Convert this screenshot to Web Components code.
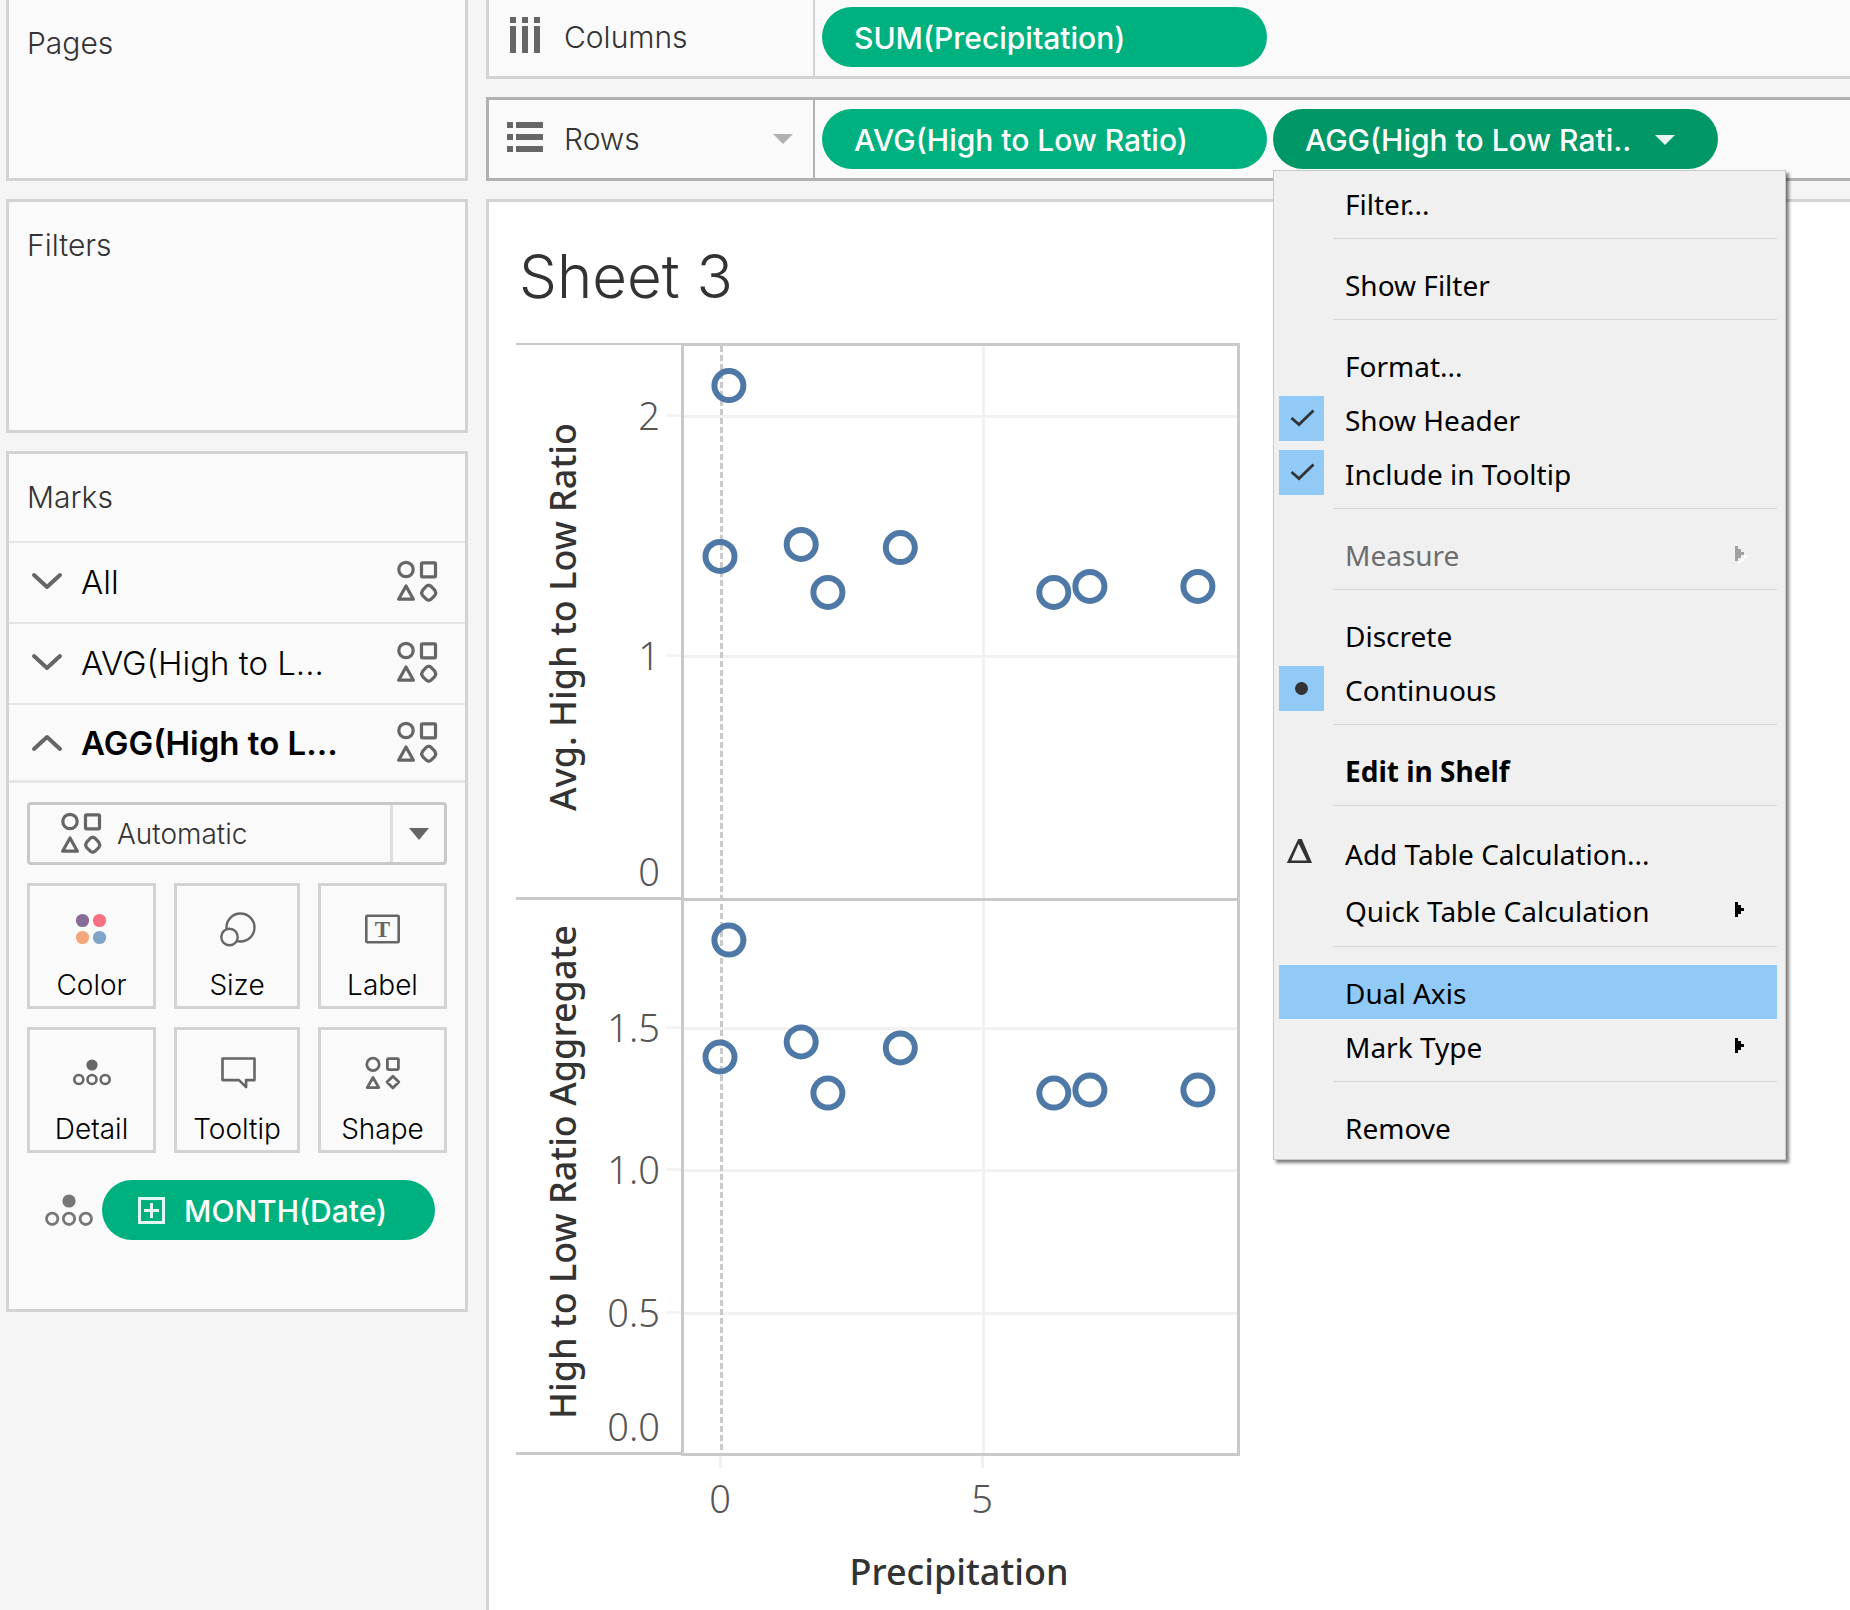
<!DOCTYPE html>
<html lang="en">
<head>
<meta charset="utf-8">
<title>Sheet 3</title>
<style>
  :root {
    --line: #d3d3d3;
    --line-strong: #b1b1b1;
    --rule: #e6e6e6;
    --panel: #fafafa;
    --ink: #333333;
    --icon: #666666;
    --green: #00b180;
    --green-dark: #009767;
    --ui: Inter, "Liberation Sans", sans-serif;
    --menu: "Noto Sans", "Open Sans", sans-serif;
  }
  body { margin: 0; background: #f5f5f5; color: var(--ink); font-family: var(--ui); overflow: hidden; }
</style>
</head>
<body>
<viz-workspace></viz-workspace>

<script>
const define = (name, html, setup) => {
  const template = document.createElement("template");
  template.innerHTML = html;
  customElements.define(name, class extends HTMLElement {
    connectedCallback() {
      if (this.shadowRoot) return;
      this.attachShadow({ mode: "open" }).append(template.content.cloneNode(true));
      if (setup) setup(this, this.shadowRoot);
    }
  });
};

/* Icons: [width, height, markup] */
const ICONS = {
  columns: [34, 40, `<path fill="#666" d="M3 0h6v6H3zM15 0h6v6h-6zM27 0h6v6h-6zM3 9h6v27H3zM15 9h6v27h-6zM27 9h6v27h-6z"/>`],
  rows: [36, 34, `<path fill="#666" d="M0 0h6v6H0zM0 12h6v6H0zM0 24h6v6H0zM9 0h27v6H9zM9 12h27v6H9zM9 24h27v6H9z"/>`],
  down: [30, 18, `<path fill="none" stroke="#666" stroke-width="4" stroke-linecap="round" stroke-linejoin="round" d="M2 2l13 12L28 2"/>`],
  up: [30, 18, `<path fill="none" stroke="#666" stroke-width="4" stroke-linecap="round" stroke-linejoin="round" d="M2 15L15 3l13 12"/>`],
  shapes: [42, 42, `<g fill="none" stroke="#666" stroke-width="3.2" stroke-linejoin="round"><circle cx="10" cy="8.500" r="7.200"/><rect x="25.500" y="1.800" width="14" height="14" rx="1"/><path d="M10 25L2.600 38.200h14.800zM32.700 24.200l2.200.9 3.800 4 1.200 3-1.200 2.600-3.800 3.700-2.200 1-2.200-1-3.800-3.700-1.200-2.600 1.200-3 3.800-4z"/></g>`],
  shapesSmall: [36, 34, `<g fill="none" stroke="#666" stroke-width="2.8" stroke-linejoin="round"><circle cx="8" cy="8.400" r="6.200"/><rect x="22.400" y="2.600" width="11" height="11" rx="1"/><path d="M8 21.500L2.200 31.600h11.600zM27.900 20.200l5.900 5.900-5.900 5.900-5.900-5.900z"/></g>`],
  color: [32, 30, `<circle cx="6.500" cy="6.500" r="6.600" fill="#866d97"/><circle cx="23.500" cy="6.500" r="6.600" fill="#fa7080"/><circle cx="6.500" cy="23.500" r="6.600" fill="#f4a77c"/><circle cx="23.500" cy="23.500" r="6.600" fill="#80a3ca"/>`],
  size: [34, 34, `<g fill="#fafafa" stroke="#666" stroke-width="2.400"><circle cx="20.500" cy="15.500" r="14"/><circle cx="9.500" cy="25" r="8.200"/></g>`],
  label: [36, 30, `<rect x="1.300" y="1.800" width="32.400" height="26.400" rx="1" fill="none" stroke="#666" stroke-width="2.600"/><text x="17.500" y="22.500" text-anchor="middle" font-family="Liberation Serif" font-weight="700" font-size="23" fill="#666">T</text>`],
  detail: [38, 28, `<circle cx="19" cy="6" r="5.600" fill="#666"/><g fill="none" stroke="#666" stroke-width="2.600"><circle cx="5.800" cy="20.500" r="4.500"/><circle cx="19" cy="20.500" r="4.500"/><circle cx="32.200" cy="20.500" r="4.500"/></g>`],
  detailLarge: [48, 32, `<circle cx="24" cy="7" r="6.600" fill="#777"/><g fill="none" stroke="#777" stroke-width="2.800"><circle cx="7.200" cy="24.800" r="5.700"/><circle cx="24" cy="24.800" r="5.700"/><circle cx="40.800" cy="24.800" r="5.700"/></g>`],
  tooltip: [33, 32, `<path fill="none" stroke="#666" stroke-width="2.600" stroke-linejoin="round" d="M1.500 1.500h32v21.600h-8.400v7L18 23.100H1.500z"/>`],
  plus: [27, 27, `<path fill="none" stroke="#e5f7f2" stroke-width="3" d="M1.500 1.500h24v24h-24zM13.500 6v15M6 13.500h15"/>`],
  check: [45, 45, `<path fill="none" stroke="#333" stroke-width="2.800" d="M12.500 22l7.500 6.500L34.500 14.500"/>`],
  dot: [45, 45, `<circle cx="22.500" cy="22.500" r="6.500" fill="#333"/>`],
  delta: [45, 45, `<path fill="#333" fill-rule="evenodd" d="M7.800 34L19.200 10h3.600L33 34zM12.300 31.600h15.600L19.700 14.800z"/>`]
};
customElements.define("viz-icon", class extends HTMLElement {
  static observedAttributes = ["name"];
  connectedCallback() { this.draw(); }
  attributeChangedCallback() { this.draw(); }
  draw() {
    const icon = ICONS[this.getAttribute("name")];
    if (!icon) return;
    const [w, h, body] = icon;
    const root = this.shadowRoot || this.attachShadow({ mode: "open" });
    root.innerHTML =
      `<style>:host{display:block;flex:none}svg{display:block;overflow:visible}</style>
       <svg width="${w}" height="${h}" viewBox="0 0 ${w} ${h}" aria-hidden="true">${body}</svg>`;
  }
});

/* Bordered card with a heading */
define("viz-card", `
  <style>
    :host { display: block; box-sizing: border-box; background: var(--panel); border: 3px solid var(--line); }
    :host([first]) { border-top: 0; }
    h2 { margin: 0; padding: 25px 18px 0; font-size: 30px; line-height: 36px; font-weight: 300; }
  </style>
  <h2></h2><slot></slot>`,
  (host, root) => { root.querySelector("h2").textContent = host.getAttribute("heading"); });

/* Field pill */
define("viz-pill", `
  <style>
    :host { display: block; flex: none; width: 445px; }
    button { box-sizing: border-box; width: 100%; height: 60px; border: 0; border-radius: 30px; padding: 1px 32px 0;
      display: flex; align-items: center; background: var(--green); color: #fff;
      font: 500 30px/36px var(--ui); white-space: nowrap; }
    :host([active]) button { background: var(--green-dark); }
    i { display: none; margin-left: 24px; border: 10px solid transparent; border-top-color: #e5f4f0; border-bottom: 0; }
    :host([active]) i { display: block; }
    ::slotted(viz-icon) { margin: 0 19px 0 4px; }
  </style>
  <button type="button"><slot></slot><i></i></button>`);

/* Columns / Rows shelf */
define("viz-shelf", `
  <style>
    :host { display: flex; box-sizing: border-box; height: 84px; background: var(--panel);
      border: 3px solid var(--line); border-right: 0; --edge: var(--line); }
    :host([first]) { border-top: 0; height: 79px; }
    :host([focused]) { border-color: var(--line-strong); --edge: var(--line-strong); }
    .head { box-sizing: border-box; width: 326px; flex: none; border-right: 2px solid var(--edge);
      display: flex; align-items: center; padding: 0 20px 0 18px; font-size: 30px; line-height: 36px; font-weight: 300; }
    .icon { width: 57px; }
    i { display: none; margin-left: auto; border: 10px solid transparent; border-top-color: var(--line-strong); border-bottom: 0; }
    :host([focused]) i { display: block; }
    .fields { display: flex; align-items: center; gap: 6px; padding-left: 7px; }
    :host([first]) .head, :host([first]) .fields { padding-bottom: 2px; }
  </style>
  <div class="head"><span class="icon"><viz-icon></viz-icon></span><span class="name"></span><i></i></div>
  <div class="fields"><slot></slot></div>`,
  (host, root) => {
    root.querySelector("viz-icon").setAttribute("name", host.getAttribute("icon"));
    root.querySelector(".name").textContent = host.getAttribute("name");
  });

/* Collapsible row of the Marks card */
define("viz-mark-row", `
  <style>
    :host { display: block; border-top: 2px solid var(--rule); }
    button { box-sizing: border-box; width: 100%; height: 79px; border: 0; background: none; color: #000;
      display: flex; align-items: center; padding: 0 27px 2px 23px; font: 300 33px/40px var(--ui); text-align: left; }
    span { flex: 1; padding-left: 19px; }
    :host([open]) { border-bottom: 3px solid var(--rule); }
    :host([open]) button { height: 75px; font-weight: 600; padding-bottom: 0; }
  </style>
  <button type="button"><viz-icon name="down"></viz-icon><span><slot></slot></span><viz-icon name="shapes"></viz-icon></button>`,
  (host, root) => {
    const open = host.hasAttribute("open");
    root.querySelector("viz-icon").setAttribute("name", open ? "up" : "down");
    root.querySelector("button").setAttribute("aria-expanded", open);
  });

/* Mark type drop-down */
define("viz-mark-type", `
  <style>
    :host { display: grid; grid-template-columns: 1fr 54px; box-sizing: border-box; height: 63px;
      border: 3px solid #c8c8c8; border-radius: 4px; align-items: center; }
    viz-icon { grid-area: 1 / 1; margin-left: 30px; }
    select { grid-area: 1 / 1 / 2 / 3; width: 100%; height: 57px; margin: 0; padding: 1px 0 0 87px; border: 0; background: none;
      appearance: none; color: var(--ink); font: 300 28px/36px var(--ui); }
    .arrow { grid-area: 1 / 2; height: 57px; border-left: 3px solid #dedede; display: flex; align-items: center; justify-content: center;
      pointer-events: none; }
    i { border: 10px solid transparent; border-top: 12px solid var(--icon); border-bottom: 0; }
  </style>
  <viz-icon name="shapes"></viz-icon>
  <select aria-label="Mark type"><option>Automatic</option></select>
  <div class="arrow"><i></i></div>`);

/* Square button of the Marks card */
define("viz-mark-button", `
  <style>
    :host { display: block; }
    button { box-sizing: border-box; width: 100%; height: 126px; padding: 24px 0 0; border: 3px solid var(--line); background: none;
      display: flex; flex-direction: column; align-items: center; gap: 22px; color: #000; font: 300 28px/30px var(--ui); }
    .icon { height: 38px; display: flex; align-items: center; }
  </style>
  <button type="button"><span class="icon"><slot name="icon"></slot></span><span><slot></slot></span></button>`);

define("viz-marks", `
  <style>
    :host { display: block; }
    .rows { margin-top: 26px; }
    .body { padding: 19px 18px 69px; }
    .grid { display: grid; grid-template-columns: 129fr 126fr 129fr; gap: 18px; margin: 18px 0 27px; }
    .field { display: flex; align-items: center; gap: 9px; padding: 0 12px 0 18px; }
    .field viz-pill { flex: 1; width: auto; }
  </style>
  <div class="rows">
    <viz-mark-row>All</viz-mark-row>
    <viz-mark-row>AVG(High to L...</viz-mark-row>
    <viz-mark-row open>AGG(High to L...</viz-mark-row>
  </div>
  <div class="body">
    <viz-mark-type></viz-mark-type>
    <div class="grid">
      <viz-mark-button><viz-icon slot="icon" name="color"></viz-icon>Color</viz-mark-button>
      <viz-mark-button><viz-icon slot="icon" name="size"></viz-icon>Size</viz-mark-button>
      <viz-mark-button><viz-icon slot="icon" name="label"></viz-icon>Label</viz-mark-button>
      <viz-mark-button><viz-icon slot="icon" name="detail"></viz-icon>Detail</viz-mark-button>
      <viz-mark-button><viz-icon slot="icon" name="tooltip"></viz-icon>Tooltip</viz-mark-button>
      <viz-mark-button><viz-icon slot="icon" name="shapesSmall"></viz-icon>Shape</viz-mark-button>
    </div>
    <div class="field"><viz-icon name="detailLarge"></viz-icon><viz-pill><viz-icon name="plus"></viz-icon>MONTH(Date)</viz-pill></div>
  </div>`);

/* Context menu */
define("viz-menu-item", `
  <style>
    :host { display: block; }
    button { box-sizing: border-box; width: 100%; height: 54px; border: 0; padding: 2px 30px 0 0; background: none; color: #000;
      display: flex; align-items: center; font: 400 28px/36px var(--menu); text-align: left; white-space: nowrap; }
    :host([tall]) button { height: 57px; }
    :host([selected]) button { background: #91c9f7; }
    :host([bold]) button { font-weight: 700; }
    button:disabled { color: #6d6d6d; }
    .mark { width: 45px; height: 45px; margin: 0 21px 4px 0; flex: none; }
    :host([mark=check]) .mark, :host([mark=dot]) .mark { background: #91c9f7; }
    svg { margin-left: auto; display: none; }
    :host([submenu]) svg { display: block; }
  </style>
  <button type="button" role="menuitem"><span class="mark"></span><slot></slot>
    <svg width="12" height="18" viewBox="0 0 12 18" aria-hidden="true"><path class="lo" fill="none" d="M3 15h3v-3h3V9h3v3H9v3H6v3H3z"/><path class="hi" fill="#000" d="M0 0h3v3h3v3h3v3H6v3H3v3H0z"/></svg>
  </button>`,
  (host, root) => {
    const mark = host.getAttribute("mark");
    if (mark) {
      const icon = document.createElement("viz-icon");
      icon.setAttribute("name", mark);
      root.querySelector(".mark").append(icon);
    }
    if (host.hasAttribute("disabled")) {
      root.querySelector("button").disabled = true;
      root.querySelector(".hi").setAttribute("fill", "#a0a0a0");
      root.querySelector(".lo").setAttribute("fill", "#fff");
    }
  });
define("viz-menu", `
  <style>
    :host { display: block; box-sizing: border-box; width: 513px; padding: 5px 8px 5px 5px; background: #f0f0f0;
      border: 1px solid #c8c8c8; box-shadow: 3px 3px 3px rgba(0, 0, 0, .5); }
    hr { height: 1px; margin: 8px 0 18px 54px; border: 0; background: #d7d7d7; }
  </style>
  <div role="menu">
    <viz-menu-item>Filter...</viz-menu-item><hr>
    <viz-menu-item>Show Filter</viz-menu-item><hr>
    <viz-menu-item>Format...</viz-menu-item>
    <viz-menu-item mark="check">Show Header</viz-menu-item>
    <viz-menu-item mark="check">Include in Tooltip</viz-menu-item><hr>
    <viz-menu-item disabled submenu>Measure</viz-menu-item><hr>
    <viz-menu-item>Discrete</viz-menu-item>
    <viz-menu-item mark="dot">Continuous</viz-menu-item><hr>
    <viz-menu-item bold>Edit in Shelf</viz-menu-item><hr>
    <viz-menu-item tall mark="delta">Add Table Calculation...</viz-menu-item>
    <viz-menu-item tall submenu>Quick Table Calculation</viz-menu-item><hr>
    <viz-menu-item selected>Dual Axis</viz-menu-item>
    <viz-menu-item submenu>Mark Type</viz-menu-item><hr>
    <viz-menu-item>Remove</viz-menu-item>
  </div>`);

/* Scatter plot: two panes that share the Precipitation axis */
customElements.define("viz-scatter", class extends HTMLElement {
  connectedCallback() {
    if (this.shadowRoot) return;
    const precipitation = [0.17, 0, 1.55, 2.06, 3.44, 6.37, 7.06, 9.12];
    const panes = [
      { title: "Avg. High to Low Ratio", top: 0, bottom: 555, zero: 554, unit: 240, ticks: [["2", 72], ["1", 312]], base: "0",
        values: [2.131, 1.419, 1.469, 1.269, 1.456, 1.269, 1.294, 1.294] },
      { title: "High to Low Ratio Aggregate", top: 555, bottom: 1110, zero: 1112, unit: 284.5, ticks: [["1.5", 684], ["1.0", 826], ["0.5", 969]], base: "0.0",
        values: [1.81, 1.399, 1.452, 1.272, 1.431, 1.272, 1.283, 1.283] }
    ];
    const x = v => 204 + v * 52.4;
    const rect = (x0, y0, w, h, fill) => `<rect x="${x0}" y="${y0}" width="${w}" height="${h}" fill="${fill}"/>`;
    let g = rect(466, 2, 3, 1109, "#f1f1f1"), labels = "", marks = "", frame = "";
    for (const p of panes) {
      for (const [t, y] of p.ticks) {
        g += rect(167, y, 555, 3, "#f1f1f1") + rect(150, y - 1, 15, 3, "#f4f4f4");
        labels += `<text class="num" x="144" y="${y + 15}">${t}</text>`;
      }
      labels += `<text class="num" x="144" y="${p.bottom - 12}">${p.base}</text>`;
      labels += `<text class="title" transform="translate(60 ${p.top + 274}) rotate(-90)">${p.title}</text>`;
      frame += rect(0, p.bottom - 1, 166, 3, "#c9c9c9") + rect(165, p.bottom, 559, 3, "#c9c9c9");
      p.values.forEach((v, i) => {
        marks += `<circle cx="${x(precipitation[i]).toFixed(1)}" cy="${(p.zero - v * p.unit).toFixed(1)}" r="14.500"/>`;
      });
    }
    frame += rect(0, 0, 166, 2, "#c9c9c9") + rect(165, 0, 559, 3, "#c9c9c9") + rect(165, 0, 3, 1112, "#c9c9c9") + rect(721, 0, 3, 1113, "#c9c9c9");
    g += rect(203, 1113, 3, 12, "#f1f1f1") + rect(465, 1113, 3, 12, "#f1f1f1");
    this.attachShadow({ mode: "open" }).innerHTML = `
      <style>
        :host { display: block; }
        svg { display: block; font-family: "Noto Sans", "Open Sans", sans-serif; }
        .num { font-size: 38px; font-weight: 300; fill: #555; text-anchor: end; }
        .mid { text-anchor: middle; }
        .title { font-size: 36px; font-weight: 500; fill: #333; text-anchor: middle; }
        .marks { fill: none; stroke: #4e79a7; stroke-width: 6px; }
      </style>
      <svg width="724" height="1260" viewBox="0 0 724 1260" role="img" aria-label="Scatter plot of ratios by precipitation">
        ${g}<path d="M205.500 3V1110" stroke="#c9c9c9" stroke-width="3" stroke-dasharray="6 3"/>
        ${frame}${labels}
        <text class="num mid" x="204" y="1170">0</text><text class="num mid" x="466" y="1170">5</text>
        <text class="title" x="443" y="1242">Precipitation</text>
        <g class="marks">${marks}</g>
      </svg>`;
  }
});

define("viz-sheet", `
  <style>
    :host { display: block; box-sizing: border-box; background: #fff; border: 3px solid var(--line); border-width: 3px 0 0 3px; padding: 36px 27px 0; }
    h1 { margin: 0; padding: 0 3px; font-size: 60px; line-height: 76px; font-weight: 300; }
    viz-scatter { margin-top: 29px; }
  </style>
  <h1>Sheet 3</h1>
  <viz-scatter></viz-scatter>`);

define("viz-workspace", `
  <style>
    :host { display: grid; grid-template-columns: 462px minmax(0, 1fr); column-gap: 18px; padding-left: 6px; min-height: 100vh; }
    aside, main { display: flex; flex-direction: column; gap: 18px; }
    .pages { height: 181px; }
    .filters { height: 234px; }
    viz-sheet { flex: 1; }
    .anchor { position: relative; }
    viz-menu { position: absolute; z-index: 2; left: 0; top: 61px; }
  </style>
  <aside>
    <viz-card class="pages" first heading="Pages"></viz-card>
    <viz-card class="filters" heading="Filters"></viz-card>
    <viz-card heading="Marks"><viz-marks></viz-marks></viz-card>
  </aside>
  <main>
    <viz-shelf first icon="columns" name="Columns"><viz-pill>SUM(Precipitation)</viz-pill></viz-shelf>
    <viz-shelf focused icon="rows" name="Rows">
      <viz-pill>AVG(High to Low Ratio)</viz-pill>
      <div class="anchor"><viz-pill active>AGG(High to Low Rati..</viz-pill><viz-menu></viz-menu></div>
    </viz-shelf>
    <viz-sheet></viz-sheet>
  </main>`);
</script>
</body>
</html>
